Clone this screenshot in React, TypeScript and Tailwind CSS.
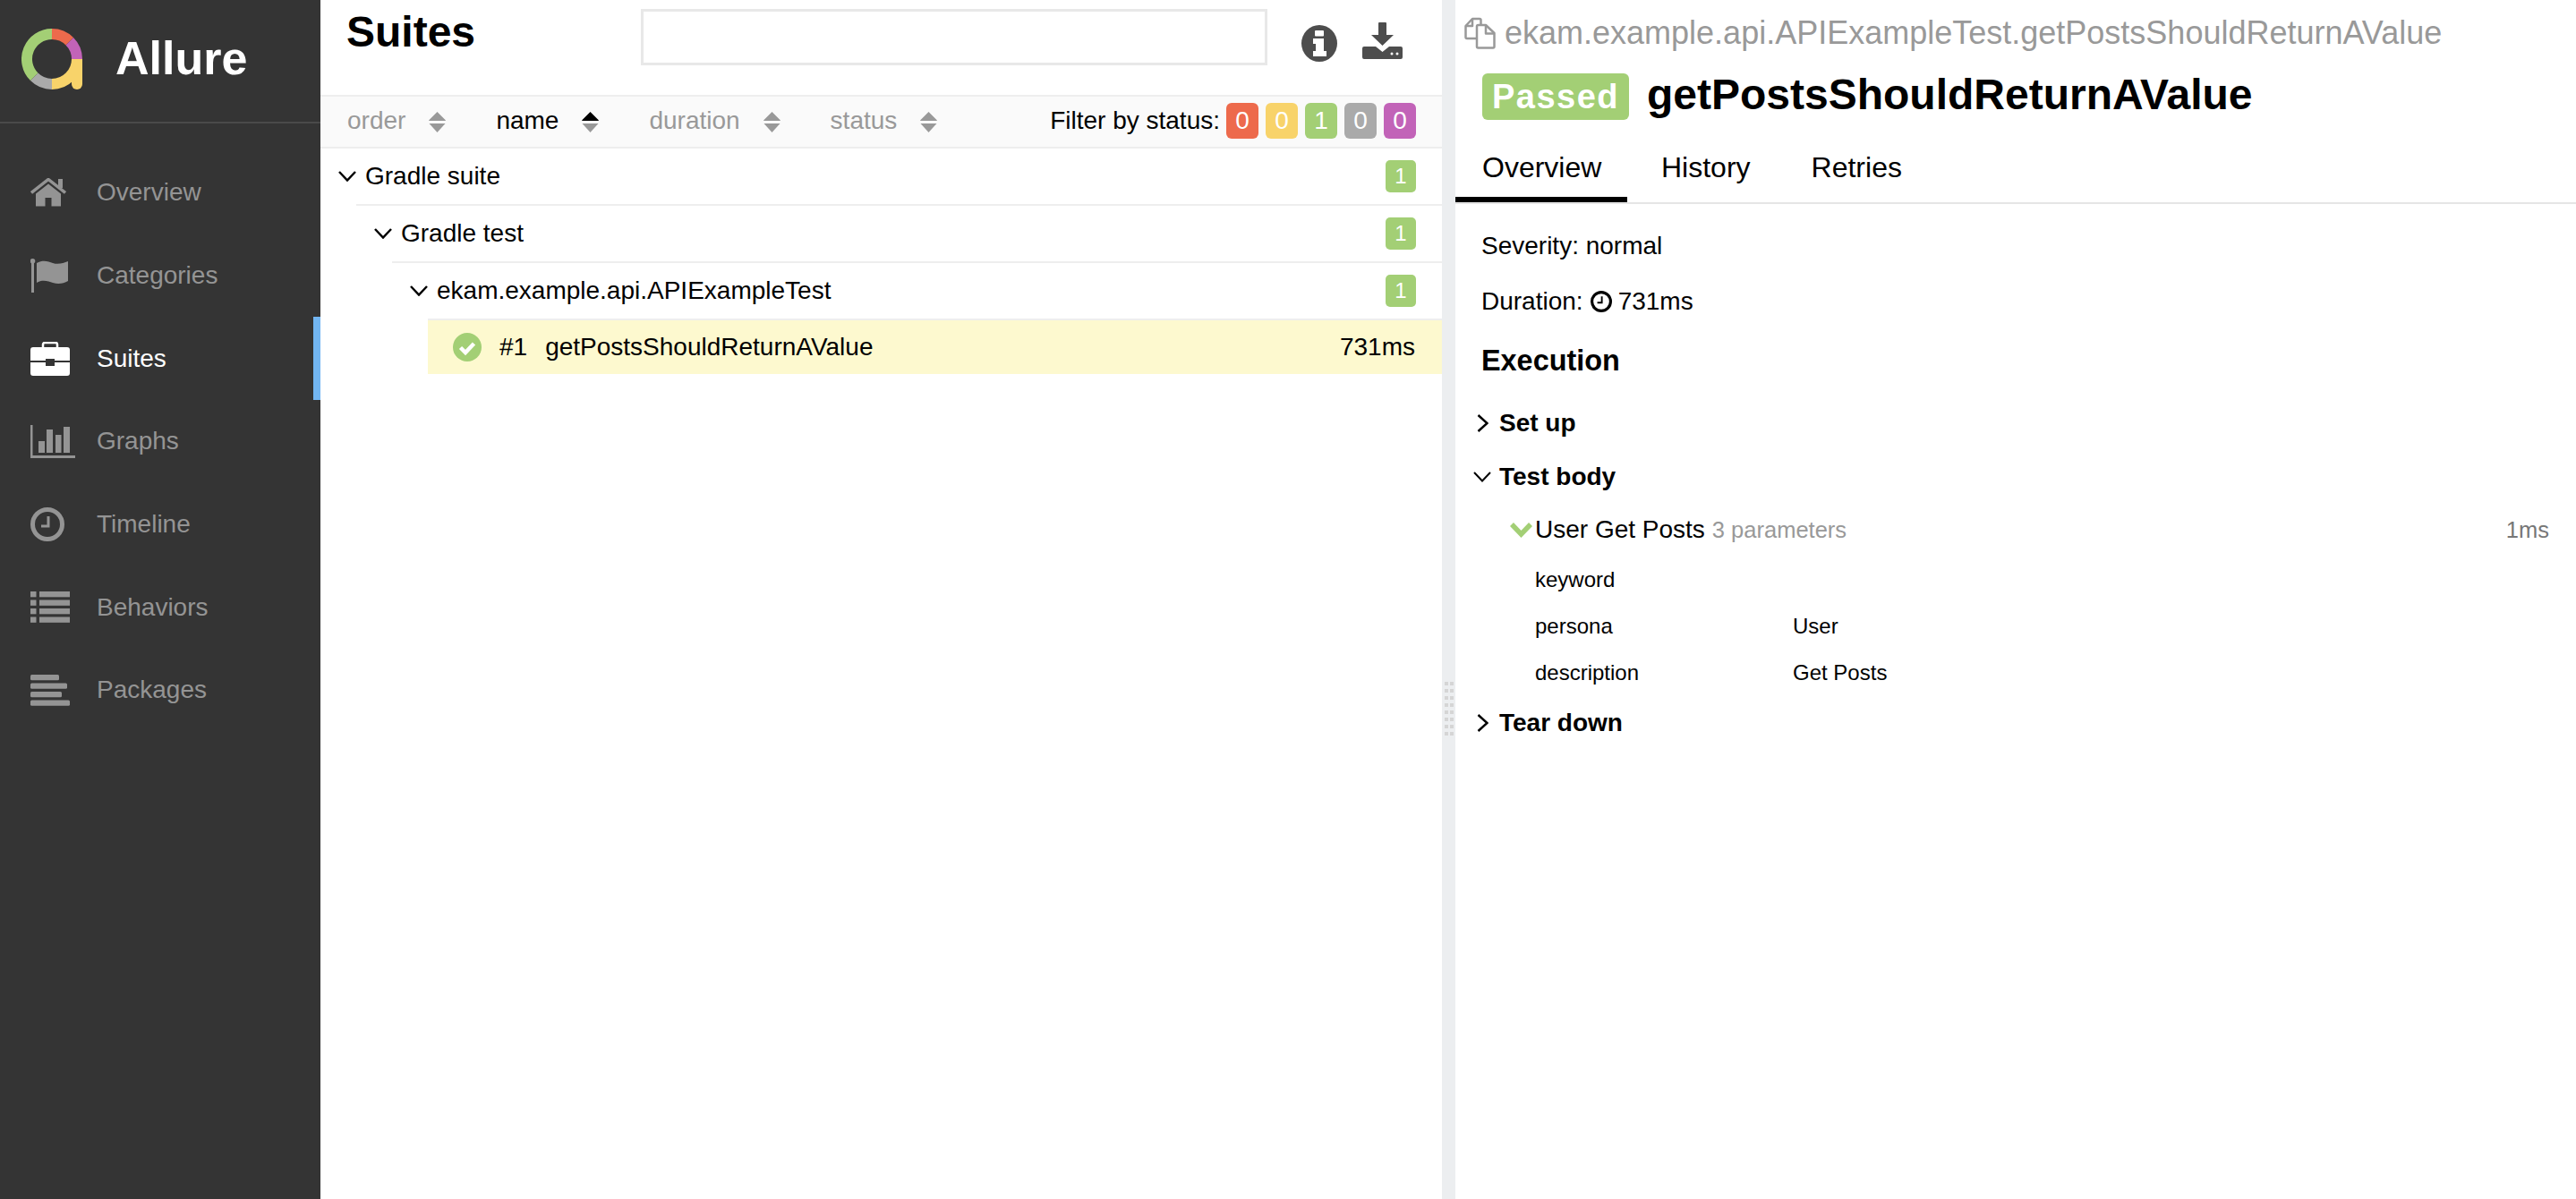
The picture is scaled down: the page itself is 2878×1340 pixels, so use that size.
import type { ReactNode } from "react";

const FONT = "font-['Liberation_Sans',Arial,sans-serif]";

function Logo() {
  return (
    <svg width="68" height="68" viewBox="0 0 68 68" fill="none" strokeWidth="12">
      <path d="M34 6A28 28 0 0 1 53.8 14.2" stroke="#ed6a4c" />
      <path d="M53.8 14.2A28 28 0 0 1 62 34" stroke="#c263b8" />
      <path d="M62 34A28 28 0 0 1 34 62" stroke="#f8d36a" />
      <path d="M56 34h12v28a6 6 0 0 1-12 0z" fill="#f8d36a" stroke="none" />
      <path d="M34 62A28 28 0 0 1 14.2 53.8" stroke="#aaaaaa" />
      <path d="M14.2 53.8A28 28 0 0 1 34 6" stroke="#a3cf75" />
    </svg>
  );
}

function HomeIcon() {
  return (
    <svg width="40" height="32" viewBox="0 0 40 32" fill="currentColor">
      <rect x="31" y="1" width="5" height="10" />
      <path d="M1 16.500L20 1.500L39 16.500" fill="none" stroke="currentColor" strokeWidth="3.500" />
      <path d="M20 6.500L34 17.500V31.500H23.500V22H16.500V31.500H6V17.500z" />
    </svg>
  );
}

function FlagIcon() {
  return (
    <svg width="42" height="38" viewBox="0 0 42 38" fill="currentColor">
      <circle cx="2.500" cy="2.800" r="2.800" />
      <rect x="1" y="3" width="3" height="35" />
      <path d="M7 5C14 1 20 3 25 5C31 7 37 5 42 3V25C37 28 31 29 25 27C20 25 13 23 7 27z" />
    </svg>
  );
}

function BriefcaseIcon() {
  return (
    <svg width="44" height="38" viewBox="0 0 44 38" fill="currentColor">
      <path d="M14 7V3a2 2 0 0 1 2-2h12a2 2 0 0 1 2 2v4" fill="none" stroke="currentColor" strokeWidth="2.500" />
      <path d="M3 6h38a3 3 0 0 1 3 3v12H27v-2H17v2H0V9a3 3 0 0 1 3-3z" />
      <path d="M0 23h17v4h10v-4h17v12a3 3 0 0 1-3 3H3a3 3 0 0 1-3-3z" />
    </svg>
  );
}

function GraphsIcon() {
  return (
    <svg width="50" height="37" viewBox="0 0 50 37" fill="currentColor">
      <rect x="0" y="0" width="2.500" height="37" />
      <rect x="0" y="34" width="50" height="3" />
      <rect x="9" y="18" width="7" height="13" />
      <rect x="18" y="5" width="7" height="26" />
      <rect x="28" y="11" width="6.500" height="20" />
      <rect x="37" y="2" width="7" height="29" />
    </svg>
  );
}

function ClockIcon({ size = 38 }: { size?: number }) {
  return (
    <svg width={size} height={size} viewBox="0 0 38 38" fill="none" stroke="currentColor" strokeWidth="5">
      <circle cx="19" cy="19" r="16.500" />
      <path d="M20 10V21H12" strokeWidth="3" />
    </svg>
  );
}

function ListIcon() {
  return (
    <svg width="44" height="35" viewBox="0 0 44 35" fill="currentColor">
      {[0, 9.500, 19, 28.500].map((y) => (
        <g key={y}>
          <rect x="0" y={y} width="6.500" height="6.300" />
          <rect x="10" y={y} width="34" height="6.300" />
        </g>
      ))}
    </svg>
  );
}

function AlignIcon() {
  return (
    <svg width="44" height="35" viewBox="0 0 44 35" fill="currentColor">
      <rect x="0" y="0" width="32" height="6.300" rx="1.500" />
      <rect x="0" y="9.500" width="41" height="6.300" rx="1.500" />
      <rect x="0" y="19" width="35" height="6.300" rx="1.500" />
      <rect x="0" y="28.500" width="44" height="6.300" rx="1.500" />
    </svg>
  );
}

function InfoIcon() {
  return (
    <svg width="40" height="41" viewBox="0 0 40 41">
      <ellipse cx="20" cy="20.500" rx="20" ry="20.500" fill="#4d4d4d" />
      <rect x="15" y="6" width="10" height="6.500" rx="1" fill="#fff" />
      <path d="M13 15h12v14h3v6H13v-6h3v-8h-3z" fill="#fff" />
    </svg>
  );
}

function DownloadIcon() {
  return (
    <svg width="45" height="41" viewBox="0 0 45 41" fill="#4d4d4d">
      <path d="M18 1a1 1 0 0 1 1-1h7a1 1 0 0 1 1 1v13h8L22.500 26L10 14h8z" />
      <path d="M0 29a2 2 0 0 1 2-2h13l7.500 6l7.500-6h13a2 2 0 0 1 2 2v10a2 2 0 0 1-2 2H2a2 2 0 0 1-2-2z" />
      <circle cx="33" cy="35" r="1.500" fill="#fff" />
      <circle cx="39" cy="35" r="1.500" fill="#fff" />
    </svg>
  );
}

function CopyIcon() {
  return (
    <svg width="35" height="36" viewBox="0 0 35 36" fill="none" stroke="#999999" strokeWidth="2.500" strokeLinejoin="round">
      <path d="M13 24H3a1.500 1.500 0 0 1-1.500-1.500V10L9 2h8a1.500 1.500 0 0 1 1.500 1.500V9" />
      <path d="M9 2v8H1.500" />
      <path d="M14 10.500a1.500 1.500 0 0 1 1.500-1.500H24L33.500 18V33a1.500 1.500 0 0 1-1.500 1.500H15.500A1.500 1.500 0 0 1 14 33z" />
      <path d="M24 10v8.500h9" />
    </svg>
  );
}

function CheckCircle() {
  return (
    <svg width="32" height="32" viewBox="0 0 32 32">
      <circle cx="16" cy="16" r="16" fill="#a3cf75" />
      <path d="M8.500 16.500L14 22L23.500 12" fill="none" stroke="#fff" strokeWidth="4.500" />
    </svg>
  );
}

function SortIcon({ active = false }: { active?: boolean }) {
  return (
    <svg width="19" height="23" viewBox="0 0 19 23" className="mt-[2px]">
      <path d="M9.500 0L18.500 9a.6.6 0 0 1 0 1H.500a.6.6 0 0 1 0-1z" fill={active ? "#000000" : "#999999"} />
      <path d="M.500 13h18L9.500 23z" fill="#999999" />
    </svg>
  );
}

function ChevronDown({ thin = true }: { thin?: boolean }) {
  return (
    <svg width="20" height="12" viewBox="0 0 20 12" fill="none" stroke="#000000" strokeWidth={thin ? 2.500 : 2}>
      <path d="M1 1L10 10.500L19 1" />
    </svg>
  );
}

function ChevronRight() {
  return (
    <svg width="13" height="20" viewBox="0 0 13 20" fill="none" stroke="#000000" strokeWidth="2.500">
      <path d="M1.500 1L11.500 10L1.500 19" />
    </svg>
  );
}

const navItems = [
  { label: "Overview", icon: <HomeIcon /> },
  { label: "Categories", icon: <FlagIcon /> },
  { label: "Suites", icon: <BriefcaseIcon />, active: true },
  { label: "Graphs", icon: <GraphsIcon /> },
  { label: "Timeline", icon: <ClockIcon /> },
  { label: "Behaviors", icon: <ListIcon /> },
  { label: "Packages", icon: <AlignIcon /> },
];

const sorters = [
  { label: "order" },
  { label: "name", active: true },
  { label: "duration" },
  { label: "status" },
];

const statusBadges = [
  { value: 0, bg: "bg-[#ed6a4c]" },
  { value: 0, bg: "bg-[#f8d36a]" },
  { value: 1, bg: "bg-[#a3cf75]" },
  { value: 0, bg: "bg-[#aaaaaa]" },
  { value: 0, bg: "bg-[#c263b8]" },
];

const params = [
  { name: "keyword", value: "" },
  { name: "persona", value: "User" },
  { name: "description", value: "Get Posts" },
];

function Sidebar() {
  return (
    <aside className="w-[358px] shrink-0 bg-[#343434] text-[#949494]">
      <div className="h-[138px] flex items-start pl-[24px] pt-[32px] border-b-2 border-[#4a4a4a]">
        <Logo />
        <span className="ml-[37px] mt-[3px] text-[52px] font-bold text-white leading-[60px]">Allure</span>
      </div>
      <nav className="pt-[31px]">
        {navItems.map((item) => (
          <div
            key={item.label}
            className={
              item.active
                ? "h-[92.7px] flex items-center pl-[34px] text-white border-r-[8px] border-[#72b6f2]"
                : "h-[92.7px] flex items-center pl-[34px]"
            }
          >
            <span className="w-[74px] flex items-center">{item.icon}</span>
            <span className="text-[28px]">{item.label}</span>
          </div>
        ))}
      </nav>
    </aside>
  );
}

function CountBadge() {
  return (
    <span className="ml-auto mr-[29px] w-[34px] h-[36px] rounded-[5px] bg-[#a3cf75] text-white text-[24px] flex items-center justify-center">
      1
    </span>
  );
}

function TreeRow({ className, children }: { className: string; children: ReactNode }) {
  return <div className={`flex items-center ${className}`}>{children}</div>;
}

function SuitesPanel() {
  return (
    <section className="w-[1253px] shrink-0 flex flex-col">
      <header className="h-[106px] flex items-start pl-[29px]">
        <h1 className="w-[329px] text-[48px] font-bold leading-[56px] mt-[8px]">Suites</h1>
        <input className="w-[700px] h-[63px] mt-[10px] border-[3px] border-[#e8e8e8] bg-white" />
        <span className="ml-[38px] mt-[28px]"><InfoIcon /></span>
        <span className="ml-[28px] mt-[25px]"><DownloadIcon /></span>
      </header>

      <div className="h-[60px] flex items-center pl-[30px] pr-[29px] pb-[2px] bg-[#fafafa] border-y-2 border-[#eeeeee] text-[28px]">
        <div className="flex gap-[56px]">
          {sorters.map((s) => (
            <div key={s.label} className={s.active ? "flex items-center gap-[26px] text-black" : "flex items-center gap-[26px] text-[#999999]"}>
              <span>{s.label}</span>
              <SortIcon active={s.active} />
            </div>
          ))}
        </div>
        <span className="ml-auto mr-[7px]">Filter by status:</span>
        <div className="flex gap-[8px]">
          {statusBadges.map((b, i) => (
            <span key={i} className={`w-[36px] h-[40px] rounded-[6px] text-white flex items-center justify-center ${b.bg}`}>
              {b.value}
            </span>
          ))}
        </div>
      </div>

      <div className="text-[28px]">
        <TreeRow className="h-[62px] pl-[20px]">
          <ChevronDown />
          <span className="ml-[10px]">Gradle suite</span>
          <CountBadge />
        </TreeRow>
        <TreeRow className="h-[64px] ml-[40px] pl-[20px] border-t-2 border-[#eeeeee]">
          <ChevronDown />
          <span className="ml-[10px]">Gradle test</span>
          <CountBadge />
        </TreeRow>
        <TreeRow className="h-[64px] ml-[80px] pl-[20px] border-t-2 border-[#eeeeee]">
          <ChevronDown />
          <span className="ml-[10px]">ekam.example.api.APIExampleTest</span>
          <CountBadge />
        </TreeRow>
        <TreeRow className="h-[62px] ml-[120px] pl-[28px] pr-[30px] border-t-2 border-[#eeeeee] bg-[#fdf9cf]">
          <CheckCircle />
          <span className="ml-[20px]">#1</span>
          <span className="ml-[20px]">getPostsShouldReturnAValue</span>
          <span className="ml-auto">731ms</span>
        </TreeRow>
      </div>
    </section>
  );
}

function Splitter() {
  return (
    <div className="w-[15px] shrink-0 bg-[#eceef0] pt-[762px] pl-[3px]">
      <div className="grid grid-cols-2 w-[10px] gap-x-[2px] gap-y-[4px]">
        {Array.from({ length: 16 }).map((_, i) => (
          <span key={i} className="w-[4px] h-[4px] bg-[#d5d5d5]" />
        ))}
      </div>
    </div>
  );
}

function TestPanel() {
  return (
    <section className="flex-1 min-w-0">
      <div className="h-[74px] flex items-center pl-[10px] text-[36px] text-[#999999]">
        <CopyIcon />
        <span className="ml-[10px]">ekam.example.api.APIExampleTest.getPostsShouldReturnAValue</span>
      </div>
      <div className="h-[68px] flex items-center pl-[30px]">
        <span className="w-[164px] h-[52px] rounded-[6px] bg-[#a3cf75] text-white text-[38px] font-bold tracking-[1.500px] flex items-center justify-center">
          Passed
        </span>
        <h2 className="ml-[20px] -mt-[4px] text-[48px] font-bold">getPostsShouldReturnAValue</h2>
      </div>
      <div className="h-[86px] flex items-end border-b-2 border-[#e5e5e5] text-[32px]">
        <span className="w-[192px] h-[72px] pl-[30px] pt-[9px] border-b-[6px] border-black">Overview</span>
        <span className="h-[72px] ml-[38px] pt-[9px]">History</span>
        <span className="h-[72px] ml-[68px] pt-[9px]">Retries</span>
      </div>

      <div className="pt-[16px] text-[28px]">
        <div className="h-[62px] flex items-center pl-[29px]">Severity: normal</div>
        <div className="h-[62px] flex items-center pl-[29px]">
          Duration:
          <span className="ml-[8px] mr-[7px] flex"><ClockIcon size={24} /></span>
          731ms
        </div>
        <h3 className="h-[70px] flex items-center pl-[29px] text-[32.4px] font-bold">Execution</h3>
        <div className="h-[5px]" />

        <div className="h-[60px] flex items-center pl-[24px] font-bold">
          <ChevronRight />
          <span className="ml-[12px]">Set up</span>
        </div>
        <div className="h-[60px] flex items-center pl-[20px] font-bold">
          <ChevronDown thin={false} />
          <span className="ml-[9px]">Test body</span>
        </div>
        <div className="h-[58px] flex items-center pl-[61px] pr-[30px]">
          <svg width="25" height="17" viewBox="0 0 25 17" fill="none" stroke="#a3cf75" strokeWidth="5.500">
            <path d="M2 2L12.500 13L23 2" />
          </svg>
          <span className="ml-[3px]">User Get Posts</span>
          <span className="ml-[8px] text-[25.5px] text-[#999999]">3 parameters</span>
          <span className="ml-auto text-[25.5px] text-[#777777]">1ms</span>
        </div>
        <div className="h-[1px]" />
        {params.map((p) => (
          <div key={p.name} className="h-[52px] flex items-center pl-[89px] text-[24px]">
            <span className="w-[288px]">{p.name}</span>
            <span>{p.value}</span>
          </div>
        ))}
        <div className="h-[60px] flex items-center pl-[24px] font-bold">
          <ChevronRight />
          <span className="ml-[12px]">Tear down</span>
        </div>
      </div>
    </section>
  );
}

export default function App() {
  return (
    <div className={`w-[2878px] h-[1340px] flex overflow-hidden bg-white text-black ${FONT}`}>
      <Sidebar />
      <SuitesPanel />
      <Splitter />
      <TestPanel />
    </div>
  );
}
